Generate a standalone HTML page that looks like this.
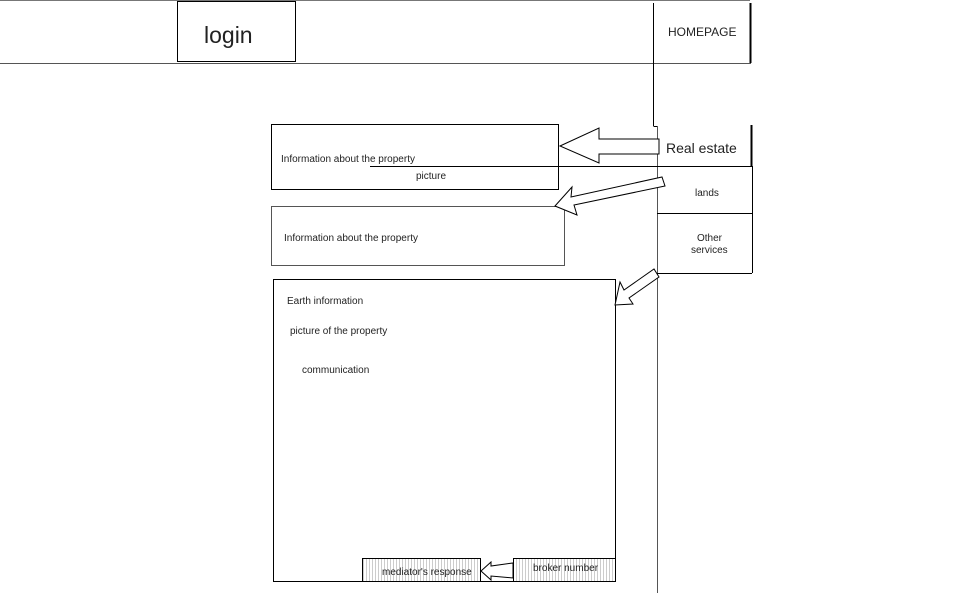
<!DOCTYPE html>
<html><head><meta charset="utf-8"><style>
html,body{margin:0;padding:0;background:#fff;width:967px;height:593px;overflow:hidden}
text{font-family:"Liberation Sans",sans-serif;fill:#222}
</style></head><body>
<svg width="967" height="593" viewBox="0 0 967 593" xmlns="http://www.w3.org/2000/svg">
<defs>
<pattern id="st" width="3" height="10" patternUnits="userSpaceOnUse"><rect width="3" height="10" fill="#fff"/><line x1="0.5" y1="0" x2="0.5" y2="10" stroke="#ccc" stroke-width="1"/></pattern>
</defs>
<g fill="none" stroke="#000" stroke-width="1">
<line x1="0" y1="0.5" x2="750" y2="0.5" stroke="#777"/>
<line x1="0" y1="63.5" x2="751" y2="63.5" stroke="#555"/>
<rect x="177.5" y="1.5" width="118" height="60"/>
<line x1="653.5" y1="3" x2="653.5" y2="126"/>
<line x1="653.5" y1="126.5" x2="657" y2="126.5"/>
<line x1="657.5" y1="126" x2="657.5" y2="593" stroke="#555"/>
<line x1="750.5" y1="3" x2="750.5" y2="63" stroke-width="2"/>
<line x1="751.5" y1="125" x2="751.5" y2="166" stroke-width="2"/>
<line x1="370" y1="166.5" x2="752" y2="166.5"/>
<line x1="752.5" y1="166" x2="752.5" y2="273"/>
<line x1="657" y1="213.5" x2="752" y2="213.5"/>
<line x1="657" y1="273.5" x2="752" y2="273.5"/>
<rect x="271.5" y="124.5" width="287" height="65"/>
<rect x="271.5" y="206.5" width="293" height="59" stroke="#555"/>
<rect x="273.5" y="279.5" width="342" height="302"/>
<rect x="362.5" y="558.5" width="118" height="23" fill="url(#st)"/>
<rect x="513.5" y="558.5" width="102" height="23" fill="url(#st)"/>
<polygon points="560,146 599,128 599,139 659,139 659,154 599,154 599,163" fill="#fff"/>
<polygon points="555,206 572,187 571,197 662,177 665,186 574,205 577,215" fill="#fff"/>
<polygon points="615,305 620,282 624,290 654,269 659,277 629,298 633,304" fill="#fff"/>
<polygon points="481,571 491,562 491,566 513,563 513,578 491,576 491,580" fill="#fff"/>
</g>
<text x="204" y="43" font-size="23">login</text>
<text x="668" y="36" font-size="12">HOMEPAGE</text>
<text x="666" y="153" font-size="14">Real estate</text>
<text x="695" y="196" font-size="10">lands</text>
<text x="697" y="241" font-size="10">Other</text>
<text x="691" y="253" font-size="10">services</text>
<text x="281" y="162" font-size="10">Information about the property</text>
<text x="416" y="179" font-size="10">picture</text>
<text x="284" y="241" font-size="10">Information about the property</text>
<text x="287" y="304" font-size="10">Earth information</text>
<text x="290" y="334" font-size="10">picture of the property</text>
<text x="302" y="373" font-size="10">communication</text>
<text x="382" y="575" font-size="10">mediator's response</text>
<text x="533" y="571" font-size="10">broker number</text>
</svg>
</body></html>
